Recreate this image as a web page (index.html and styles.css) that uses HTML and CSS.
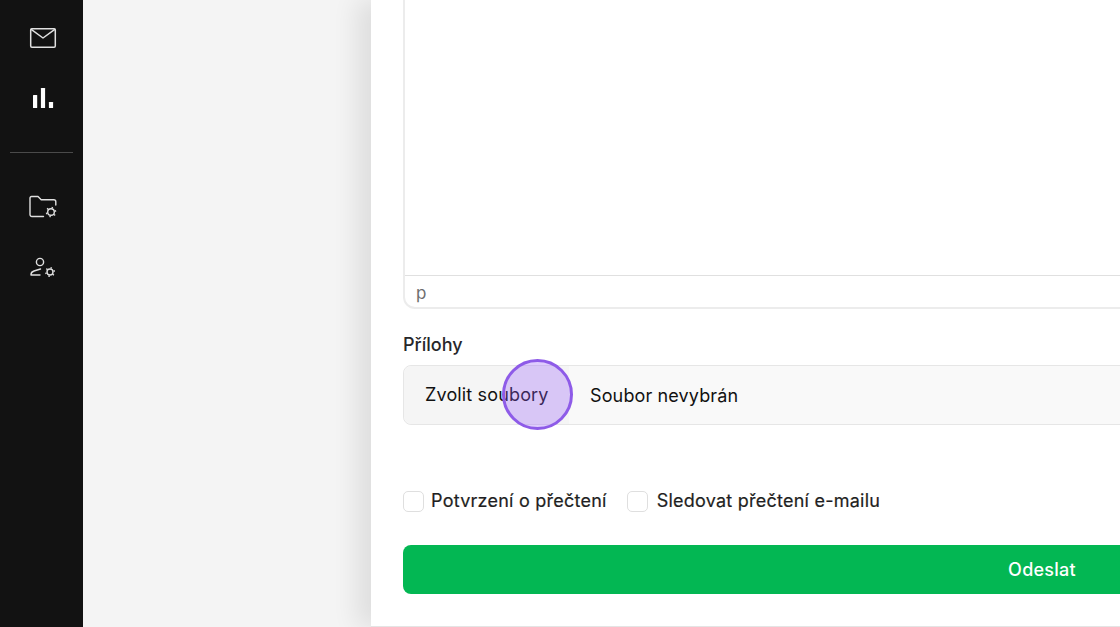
FILE: index.html
```html
<!DOCTYPE html>
<html lang="cs">
<head>
	<meta charset="UTF-8">
	<title>Odeslat</title>
	<link rel="stylesheet" href="styles.css">
</head>
<body>
<div class="app">
	<nav class="sidebar">
		<a class="nav-item nav-mail">
			<svg width="28" height="22" viewBox="0 0 28 22" fill="none" stroke="#e0e0e0" stroke-width="1.5" stroke-linejoin="round" stroke-linecap="round">
				<rect x="1.700" y="1.700" width="24.600" height="18.600" rx="1.200"/>
				<path d="M2.200 2.400 14 11 25.800 2.400"/>
			</svg>
		</a>
		<a class="nav-item nav-stats">
			<svg width="22" height="22" viewBox="0 0 22 22" fill="#fff">
				<rect x="1" y="8" width="4.200" height="13" rx=".5"/>
				<rect x="8.900" y="1" width="4.200" height="20" rx=".5"/>
				<rect x="16.900" y="15" width="4.200" height="6" rx=".5"/>
			</svg>
		</a>
		<div class="nav-line"></div>
		<a class="nav-item nav-folder">
			<svg width="28" height="24" viewBox="0 0 28 24" fill="none" stroke="#e0e0e0" stroke-width="1.400" stroke-linejoin="round" stroke-linecap="round">
				<path d="M14.500 21.500H3a2 2 0 0 1-2-2V3a1.500 1.500 0 0 1 1.500-1.500h6.500l3.200 3.200H24.800a2 2 0 0 1 2 2v3.300"/>
				<circle cx="22" cy="17" r="3.300"/>
				<circle cx="22" cy="17" r="4.600" stroke-dasharray="1.400 3.420" transform="rotate(30 22 17)" stroke-linecap="butt"/>
			</svg>
		</a>
		<a class="nav-item nav-user">
			<svg width="26" height="22" viewBox="0 0 26 22" fill="none" stroke="#e0e0e0" stroke-width="1.400" stroke-linejoin="round" stroke-linecap="round">
				<circle cx="10" cy="5" r="3.600"/>
				<path d="M10.500 12 4 14q-3 1-3 3.500V18h9"/>
				<circle cx="20" cy="15" r="3"/>
				<circle cx="20" cy="15" r="4.300" stroke-dasharray="1.400 3.100" transform="rotate(30 20 15)" stroke-linecap="butt"/>
			</svg>
		</a>
	</nav>

	<main class="backdrop">
		<section class="panel">
			<div class="editor">
				<div class="editor-area"></div>
				<div class="editor-status">p</div>
			</div>

			<label class="field-label">Přílohy</label>
			<div class="file-input">
				<span class="file-btn">Zvolit soubory</span>
				<span class="file-name">Soubor nevybrán</span>
			</div>

			<div class="checks">
				<label class="check"><span class="box"></span>Potvrzení o přečtení</label>
				<label class="check"><span class="box"></span>Sledovat přečtení e-mailu</label>
			</div>

			<button class="send">Odeslat</button>
		</section>
	</main>
</div>
<div class="click-mark"></div>
</body>
</html>
```

FILE: styles.css
```css
* {
	margin: 0;
	padding: 0;
	box-sizing: border-box;
}
html, body {
	width: 1120px;
	height: 627px;
	overflow: hidden;
}
body {
	font-family: Inter, "Liberation Sans", sans-serif;
	color: #111;
	background: #f4f4f4;
}
.app {
	display: flex;
	height: 627px;
}

/* sidebar */
.sidebar {
	flex: 0 0 83px;
	background: #121212;
	display: flex;
	flex-direction: column;
	align-items: center;
	padding-top: 27px;
	padding-left: 3px;
}
.nav-item {
	display: flex;
	justify-content: center;
	align-items: center;
	width: 63px;
}
.nav-stats {
	margin-top: 38px;
}
.nav-line {
	align-self: flex-start;
	width: 63px;
	height: 1px;
	background: #4a4a4a;
	margin: 43px 0 42px 7px;
}
.nav-user {
	margin-top: 38px;
}

/* modal panel */
.backdrop {
	flex: 1;
	display: flex;
	padding-left: 288px;
	min-width: 0;
}
.panel {
	flex: 0 0 1342px;
	height: 627px;
	background: #fff;
	border-bottom: 1px solid #e4e4e4;
	box-shadow: -14px 0 24px rgba(0, 0, 0, .09);
	padding: 0 32px 32px;
	display: flex;
	flex-direction: column;
}
.editor {
	flex: 1;
	display: flex;
	flex-direction: column;
	border: 2px solid #ececec;
	border-top: none;
	border-radius: 0 0 12px 12px;
}
.editor-area {
	flex: 1;
}
.editor-status {
	height: 32px;
	border-top: 1px solid #e0e0e0;
	padding-left: 11px;
	font-size: 17px;
	line-height: 34px;
	color: #6e6e6e;
}
.field-label {
	display: block;
	margin-top: 25px;
	font-size: 18px;
	font-weight: 500;
	line-height: 22px;
	color: #27272a;
}
.file-input {
	display: flex;
	align-items: center;
	height: 60px;
	margin-top: 9px;
	background: #f9f9f9;
	border: 1px solid #e6e6e6;
	border-radius: 8px;
	font-size: 18px;
	color: #111;
}
.file-btn {
	padding-left: 21px;
	width: 165px;
	height: 58px;
	margin-right: 21px;
	line-height: 58px;
	background: #f5f5f5;
	border-radius: 8px 0 0 8px;
	letter-spacing: .15px;
}
.file-name {
	letter-spacing: .13px;
}
.checks {
	display: flex;
	gap: 20px;
	margin-top: 65px;
}
.check {
	display: flex;
	align-items: center;
	font-size: 18px;
	line-height: 22px;
	letter-spacing: .24px;
	color: #1f1f22;
	-webkit-text-stroke: .2px #1f1f22;
}
.box {
	width: 21px;
	height: 21px;
	margin-right: 7px;
	background: #fff;
	border: 1px solid #dfdfdf;
	border-radius: 5px;
}
.check:last-child .box {
	margin-right: 9px;
}
.send {
	display: block;
	height: 49px;
	margin-top: 33px;
	background: #03b753;
	border: none;
	border-radius: 8px;
	color: #fff;
	font: 500 18px Inter, "Liberation Sans", sans-serif;
	letter-spacing: .25px;
}

/* click highlight from the recording */
.click-mark {
	position: absolute;
	left: 502px;
	top: 359px;
	width: 71px;
	height: 71px;
	border-radius: 50%;
	background: rgba(150, 90, 250, .3);
	border: 3px solid #8e5be8;
}
```
